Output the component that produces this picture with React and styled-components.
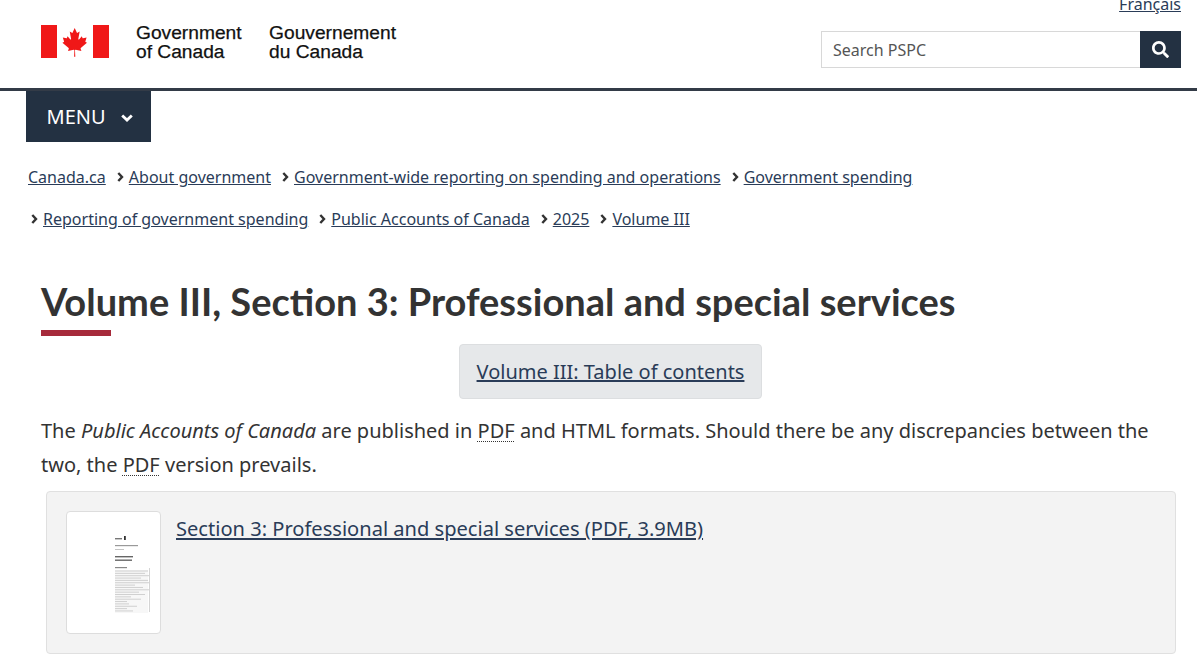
import React from "react";
import styled, { createGlobalStyle } from "styled-components";
import { FaSearch } from "react-icons/fa";

const Global = createGlobalStyle`
  html, body { margin: 0; padding: 0; background: #fff; height: 667px; overflow: hidden; }
  body { font-family: "Noto Sans", sans-serif; color: #333; }
  a { color: #2a3c58; }
`;

const Header = styled.header`
  height: 88px;
  border-bottom: 3px solid #333b47;
  display: flex;
  justify-content: space-between;
  padding: 0 16px 0 41px;
`;
const Brand = styled.div`
  display: flex;
  align-items: flex-start;
  padding-top: 25px;
`;
const Wordmark = styled.div`
  font-family: "Liberation Sans", sans-serif;
  font-size: 19.2px;
  line-height: 19px;
  color: #111;
  margin-top: -2.5px;
  -webkit-text-stroke: 0.25px #111;
  margin-left: ${p => p.$gap}px;
`;
const Tools = styled.div`
  width: 360px;
  display: flex;
  flex-direction: column;
  align-items: flex-end;
`;
const Lang = styled.a`
  font-size: 16px;
  line-height: 20px;
  margin-top: -6px;
`;
const Search = styled.div`
  margin-top: 17px;
  width: 360px;
  height: 37px;
  display: flex;
`;
const SearchField = styled.div`
  flex: 1;
  box-sizing: border-box;
  border: 1px solid #d8d8d8;
  border-right: 0;
  padding-left: 11px;
  font-size: 16px;
  line-height: 36px;
  color: #555;
`;
const SearchButton = styled.div`
  width: 41px;
  background: #233142;
  color: #fff;
  display: flex;
  align-items: center;
  justify-content: center;
  font-size: 17px;
`;
const MenuButton = styled.div`
  margin-left: 26px;
  width: 125px;
  height: 51px;
  box-sizing: border-box;
  background: #233142;
  color: #fff;
  display: flex;
  align-items: center;
  padding-left: 20.6px;
  gap: 15px;
  font-size: 20px;
`;
const Breadcrumbs = styled.nav`
  padding: 14px 0 0 28px;
  width: 1000px;
`;
const CrumbRow = styled.div`
  display: flex;
  height: 42px;
  align-items: center;
  margin-left: ${p => p.$indent}px;
  gap: 11px;
`;
const Crumb = styled.div`
  display: flex;
  align-items: center;
  gap: 5px;
  font-size: 16.03px;
  white-space: nowrap;
`;
const Main = styled.main`
  padding: 0 17px 0 41px;
`;
const Title = styled.h1`
  margin: 39px 0 0;
  font-family: Lato, sans-serif;
  font-weight: 700;
  font-size: 38px;
  line-height: 44px;
  color: #333;
  white-space: nowrap;
  &::after {
    content: "";
    display: block;
    width: 70px;
    height: 6px;
    margin-top: 7px;
    background: #a62a3b;
  }
`;
const TocRow = styled.div`
  display: flex;
  justify-content: center;
  margin-top: 8px;
`;
const TocButton = styled.a`
  box-sizing: border-box;
  width: 303px;
  height: 55px;
  text-align: center;
  background: #e6e8ea;
  border: 1px solid #dcdee0;
  border-radius: 4px;
  font-size: 20px;
  line-height: 53px;
  white-space: nowrap;
`;
const Para = styled.p`
  margin: 15px -1px 0 0;
  font-size: 20px;
  line-height: 33.6px;
  color: #333;
`;
const Abbr = styled.abbr`
  text-decoration: underline dotted 1px #333;
  text-underline-offset: 3px;
`;
const Panel = styled.section`
  box-sizing: border-box;
  margin: 10px 4px 0 5px;
  height: 163px;
  background: #f3f3f3;
  border: 1px solid #e0e0e0;
  border-radius: 4px;
  padding: 19px;
  display: flex;
  gap: 15px;
  align-items: flex-start;
`;
const Thumb = styled.div`
  box-sizing: border-box;
  width: 95px;
  height: 123px;
  background: #fff;
  border: 1px solid #ddd;
  border-radius: 4px;
  padding: 23px 0 0 48px;
`;
const PanelLink = styled.a`
  font-size: 20.08px;
  line-height: 36px;
`;

const Flag = () => (
  <svg width="68" height="33" viewBox="0 0 68 33">
    <rect width="16" height="33" fill="#f01818" />
    <rect x="52" width="16" height="33" fill="#f01818" />
    <path
      transform="translate(33.7 0.2) scale(0.0066 0.0071) translate(-4800 0)"
      fill="#f01818"
      d="M4890 4430l-45-863a95 95 0 0 1 111-98l859 151-116-320a65 65 0 0 1 20-73l941-762-212-99a65 65 0 0 1-34-79l186-572-542 115a65 65 0 0 1-73-38l-105-247-423 454a65 65 0 0 1-111-57l204-1052-327 189a65 65 0 0 1-91-27l-332-652-332 652a65 65 0 0 1-91 27l-327-189 204 1052a65 65 0 0 1-111 57l-423-454-105 247a65 65 0 0 1-73 38l-542-115 186 572a65 65 0 0 1-34 79l-212 99 941 762a65 65 0 0 1 20 73l-116 320 859-151a95 95 0 0 1 111 98l-45 863z"
    />
  </svg>
);

const ChevronRight = () => (
  <svg width="7" height="10" viewBox="0 0 7 10">
    <path d="M1.3 1 L5 5 L1.3 9" fill="none" stroke="#333" strokeWidth="2.4" />
  </svg>
);

const ChevronDown = () => (
  <svg width="12" height="8" viewBox="0 0 12 8" style={{ marginTop: 3 }}>
    <path d="M1.2 1.4 L6 6 L10.8 1.4" fill="none" stroke="#fff" strokeWidth="2.8" />
  </svg>
);

const tocLines = [33, 30, 34, 26, 33, 34, 20, 28, 34, 24, 30, 16, 26, 12, 14, 22, 12, 18];
const PdfCover = () => (
  <svg width="36" height="78" viewBox="0 0 36 78" style={{ display: "block" }}>
    <rect x="0" y="3" width="7" height="1.4" fill="#777" />
    <rect x="9" y="1" width="1.8" height="4" fill="#333" />
    <rect x="0" y="10" width="23" height="1.2" fill="#999" />
    <rect x="0" y="14" width="9" height="1" fill="#c4c4c4" />
    <rect x="0" y="21" width="18" height="1.4" fill="#666" />
    <rect x="0" y="24.5" width="17" height="1.4" fill="#666" />
    <rect x="0" y="32" width="12" height="1.2" fill="#888" />
    <rect x="0" y="35" width="33" height="43" fill="#f7f7f7" />
    <rect x="34" y="33" width="1" height="44" fill="#d4d4d4" />
    {tocLines.map((w, i) => (
      <rect key={i} x="0" y={35.5 + i * 2.35} width={w} height="1" fill="#d0d0d0" />
    ))}
  </svg>
);

const row1 = ["About government", "Government-wide reporting on spending and operations", "Government spending"];
const row2 = ["Reporting of government spending", "Public Accounts of Canada", "2025", "Volume III"];

export default function App() {
  return (
    <>
      <Global />
      <Header>
        <Brand>
          <Flag />
          <Wordmark $gap={27}>Government<br />of Canada</Wordmark>
          <Wordmark $gap={27.5}>Gouvernement<br />du Canada</Wordmark>
        </Brand>
        <Tools>
          <Lang href="#">Français</Lang>
          <Search>
            <SearchField>Search PSPC</SearchField>
            <SearchButton><FaSearch /></SearchButton>
          </Search>
        </Tools>
      </Header>
      <MenuButton>MENU <ChevronDown /></MenuButton>
      <Breadcrumbs>
        <CrumbRow $indent={0}>
          <Crumb><a href="#">Canada.ca</a></Crumb>
          {row1.map(t => (
            <Crumb key={t}><ChevronRight /><a href="#">{t}</a></Crumb>
          ))}
        </CrumbRow>
        <CrumbRow $indent={3}>
          {row2.map(t => (
            <Crumb key={t}><ChevronRight /><a href="#">{t}</a></Crumb>
          ))}
        </CrumbRow>
      </Breadcrumbs>
      <Main>
        <Title>Volume III, Section 3: Professional and special services</Title>
        <TocRow><TocButton href="#">Volume III: Table of contents</TocButton></TocRow>
        <Para>
          The <em>Public Accounts of Canada</em> are published in <Abbr>PDF</Abbr> and HTML formats. Should there be any discrepancies between the two, the <Abbr>PDF</Abbr> version prevails.
        </Para>
        <Panel>
          <Thumb><PdfCover /></Thumb>
          <PanelLink href="#">Section 3: Professional and special services (PDF, 3.9MB)</PanelLink>
        </Panel>
      </Main>
    </>
  );
}
